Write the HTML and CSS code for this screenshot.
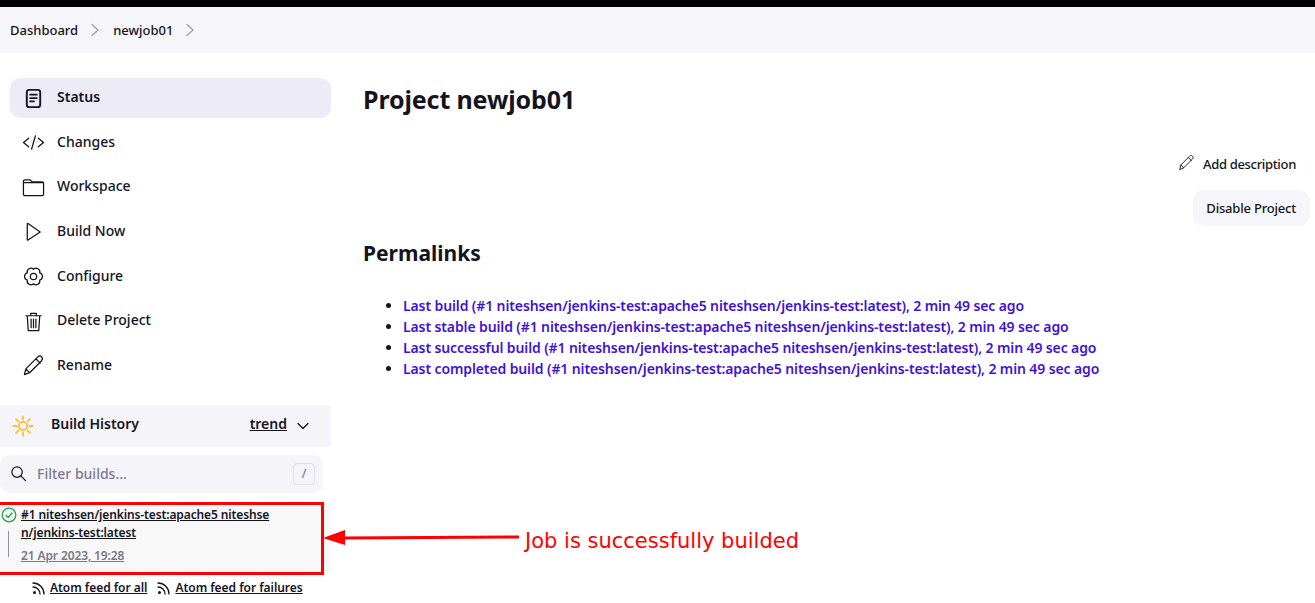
FILE: index.html
```html
<!DOCTYPE html>
<html lang="en">
<head>
<meta charset="utf-8">
<title>newjob01</title>
<link rel="stylesheet" href="styles.css">
</head>
<body>
<div class="topbar"></div>
<nav class="crumbs">
  <a class="crumb">Dashboard</a>
  <svg class="chev" viewBox="0 0 10 14"><path d="M2 1.500 8 7l-6 5.500"/></svg>
  <a class="crumb">newjob01</a>
  <svg class="chev" viewBox="0 0 10 14"><path d="M2 1.500 8 7l-6 5.500"/></svg>
</nav>
<div class="page">
  <aside class="side">
    <ul class="tasks">
      <li class="task active"><svg class="ico" viewBox="0 0 24 24"><rect x="5" y="3" width="14" height="18" rx="2.500" stroke-width="2"/><path d="M8.500 8h7M8.500 11.500h7M8.500 15h4" stroke-width="1.800"/></svg>Status</li>
      <li class="task"><svg class="ico" viewBox="0 0 24 24"><path d="M7 7.500 1.500 12 7 16.500M17 7.500l5.500 4.500-5.500 4.500M14 5l-4 14"/></svg>Changes</li>
      <li class="task"><svg class="ico" viewBox="0 0 24 24"><path d="M1.500 7V5.500a1.500 1.500 0 0 1 1.500-1.500h5.500l2 2H21a1.500 1.500 0 0 1 1.500 1.500V19a1.500 1.500 0 0 1-1.500 1.500H3A1.500 1.500 0 0 1 1.500 19V7h21"/></svg>Workspace</li>
      <li class="task"><svg class="ico" viewBox="0 0 24 24"><path d="M5.500 4v16.500a.5.5 0 0 0 .8.400L19 12.500 6.300 3.600A.5.5 0 0 0 5.500 4z"/></svg>Build Now</li>
      <li class="task"><svg class="ico" viewBox="0 0 24 24"><circle cx="12" cy="12" r="3.300"/><path d="M12 4.500A3.900 3.900 0 0 1 18.500 8.250 3.900 3.900 0 0 1 18.500 15.750 3.900 3.900 0 0 1 12 19.500 3.900 3.900 0 0 1 5.500 15.750 3.900 3.900 0 0 1 5.500 8.250 3.900 3.900 0 0 1 12 4.500z"/></svg>Configure</li>
      <li class="task"><svg class="ico" viewBox="0 0 24 24"><path d="M4 6h16M9 6V3.500h6V6M5.500 6l1 15.500h11l1-15.500M9.500 9.500v9M12 9.500v9M14.500 9.500v9"/></svg>Delete Project</li>
      <li class="task"><svg class="ico" viewBox="0 0 24 24"><path d="M2.500 21.500 4 15.500 16.500 3c1.500-1.300 3-1.200 4 0s1.300 2.500 0 4L8 19.500zM4 15.500 8 19.500M14.500 5l4.500 4.500"/></svg>Rename</li>
    </ul>
    <section class="history">
      <header class="hist-head">
        <svg class="sun" viewBox="0 0 24 24"><circle cx="12" cy="12" r="4.500"/><path d="M12 1.500v3.500M12 19v3.500M1.500 12H5M19 12h3.500M4.500 4.500 7 7M17 17l2.500 2.500M4.500 19.500 7 17M17 7l2.500-2.500"/></svg>
        <span class="hist-title">Build History</span>
        <a class="trend">trend</a>
        <svg class="down" viewBox="0 0 14 10"><path d="M2 2.500 7 7.500l5-5"/></svg>
      </header>
      <div class="filter">
        <svg class="search" viewBox="0 0 18 18"><circle cx="7.500" cy="7.500" r="5.500"/><path d="m11.500 11.500 5 5"/></svg>
        <span class="placeholder">Filter builds...</span>
        <kbd class="key">/</kbd>
      </div>
      <div class="build">
        <svg class="ok" viewBox="0 0 16 16"><circle cx="8" cy="8" r="6.800"/><path d="m5 8.300 2.200 2.200L11 6"/></svg>
        <a class="build-name">#1 niteshsen/jenkins-test:apache5 niteshse<br>n/jenkins-test:latest</a>
        <a class="build-date">21 Apr 2023, 19:28</a>
      </div>
      <footer class="feeds">
        <svg class="rss" viewBox="0 0 14 14"><circle cx="2.500" cy="11.500" r="1.500" class="dot"/><path d="M1 6a7 7 0 0 1 7 7M1 2a11 11 0 0 1 11 11"/></svg><a class="feed">Atom feed for all</a>
        <svg class="rss second" viewBox="0 0 14 14"><circle cx="2.500" cy="11.500" r="1.500" class="dot"/><path d="M1 6a7 7 0 0 1 7 7M1 2a11 11 0 0 1 11 11"/></svg><a class="feed">Atom feed for failures</a>
      </footer>
    </section>
  </aside>
  <main class="main">
    <h1 class="title">Project newjob01</h1>
    <div class="actions">
      <a class="add"><svg class="pen" viewBox="0 0 24 24"><path d="M2.500 21.500 4 15.500 16.500 3c1.500-1.300 3-1.200 4 0s1.300 2.500 0 4L8 19.500zM4 15.500 8 19.500M14.500 5l4.500 4.500"/></svg>Add description</a>
      <button class="disable">Disable Project</button>
    </div>
    <h2 class="perma">Permalinks</h2>
    <ul class="links">
      <li><a>Last build (#1 niteshsen/jenkins-test:apache5 niteshsen/jenkins-test:latest), 2 min 49 sec ago</a></li>
      <li><a>Last stable build (#1 niteshsen/jenkins-test:apache5 niteshsen/jenkins-test:latest), 2 min 49 sec ago</a></li>
      <li><a>Last successful build (#1 niteshsen/jenkins-test:apache5 niteshsen/jenkins-test:latest), 2 min 49 sec ago</a></li>
      <li><a>Last completed build (#1 niteshsen/jenkins-test:apache5 niteshsen/jenkins-test:latest), 2 min 49 sec ago</a></li>
    </ul>
  </main>
</div>
<div class="redbox"></div>
<svg class="arrow" viewBox="0 0 197 20"><path class="shaft" d="M20 10 196 9"/><path class="head" d="M0 10 22 2v15z"/></svg>
<div class="note">Job is successfully builded</div>
</body>
</html>
```
FILE: styles.css
```css
* { box-sizing: border-box; }
html, body { margin: 0; height: 603px; overflow: hidden; }
body {
  position: relative;
  background: #fff;
  color: #14141f;
  font-family: "Noto Sans", "Liberation Sans", sans-serif;
  font-size: 14px;
  font-weight: 500;
}
svg { fill: none; stroke: currentColor; stroke-width: 1.300; stroke-linecap: round; stroke-linejoin: round; flex: none; }
.topbar { height: 7px; background: #000; }
.crumbs { height: 46px; background: #f6f6fa; display: flex; align-items: center; padding-left: 10px; font-size: 13px; }
.chev { width: 10px; height: 14px; color: #9b9bab; margin: 0 13px 0 12px; stroke-width: 1.200; }
.page { display: flex; }
.side { width: 331px; padding-top: 25px; flex: none; }
.tasks { list-style: none; margin: 0 0 0 10px; padding: 0; display: flex; flex-direction: column; gap: 4.670px; }
.task { height: 40px; display: flex; align-items: center; border-radius: 10px; padding: 0 0 3px 12px; gap: 12px; }
.task.active { background: #edebf5; font-weight: 600; }
.ico { width: 23px; height: 23px; margin-top: 3px; }
.history { margin-top: 19px; }
.hist-head { height: 42px; background: #f4f4f9; display: flex; align-items: center; padding: 0 0 4px 12px; }
.sun { width: 22px; height: 22px; color: #fbc02d; margin-top: 4px; stroke-width: 2; }
.hist-title { margin-left: 17px; font-weight: 600; }
.trend { margin-left: auto; text-decoration: underline; font-weight: 600; }
.down { width: 14px; height: 10px; margin: 4px 21px 0 9px; }
.filter { width: 323px; height: 38px; margin-top: 8px; background: #f4f4f9; border-radius: 10px; display: flex; align-items: center; padding: 0 8px 0 10px; }
.search { width: 17px; height: 17px; }
.placeholder { margin-left: 10px; color: #7c7a96; }
.key { margin-left: auto; width: 22px; height: 22px; border: 1px solid #dfdfe8; border-radius: 4px; display: flex; align-items: center; justify-content: center; font-family: inherit; font-size: 12px; color: #7c7a96; }
.build { position: relative; height: 70px; margin-top: 9px; background: #f8f8f8; padding: 4px 0 0 21px; font-size: 12px; font-weight: 600; letter-spacing: -0.120px; }
.ok { position: absolute; left: 1px; top: 5px; width: 16px; height: 16px; color: #1ea64b; }
.build::after { content: ""; position: absolute; left: 8px; top: 29px; height: 26px; width: 1px; background: #8f8fa3; }
.build-name { display: block; line-height: 18px; text-decoration: underline; }
.build-date { display: block; margin-top: 5px; color: #77778a; text-decoration: underline; line-height: 18px; }
.feeds { display: flex; align-items: center; height: 32px; padding-left: 32px; font-size: 12px; font-weight: 600; letter-spacing: -0.040px; }
.feed { text-decoration: underline; margin-left: 4px; }
.rss { width: 14px; height: 14px; }
.rss.second { margin-left: 10px; }
.dot { fill: currentColor; stroke: none; }
.main { flex: 1; padding: 0 5px 0 32px; }
.title { margin: 29px 0 0; font-size: 25px; line-height: 34px; font-weight: 700; letter-spacing: -0.120px; }
.actions { display: flex; flex-direction: column; align-items: flex-end; margin-top: 36px; }
.add { display: flex; align-items: center; gap: 8px; font-size: 13px; height: 24px; margin-right: 14px; letter-spacing: -0.330px; }
.pen { width: 17px; height: 17px; margin-top: -4px; }
.disable { margin-top: 14px; height: 36px; border: 0; background: #f6f6fa; border-radius: 10px; padding: 0 14px 0 13px; font: inherit; font-size: 13px; color: inherit; letter-spacing: -0.200px; }
.perma { margin: 8px 0 0; font-size: 21px; line-height: 38px; font-weight: 700; }
.links { margin: 23px 0 0; padding: 0 0 0 40px; line-height: 21px; font-size: 14px; font-weight: 600; color: #14141f; letter-spacing: -0.115px; }
.links a { color: #4212d9; }
.redbox { position: absolute; left: -4px; top: 502px; width: 328px; height: 73px; border: 3px solid #f00; }
.arrow { position: absolute; left: 323px; top: 528px; width: 197px; height: 20px; color: #f00; }
.shaft { stroke-width: 3; stroke-linecap: butt; }
.head { fill: #f00; stroke: none; }
.note { position: absolute; left: 525px; top: 527px; font-family: "DejaVu Sans", sans-serif; font-size: 21px; font-weight: 400; color: #f00; line-height: 28px; }
```
